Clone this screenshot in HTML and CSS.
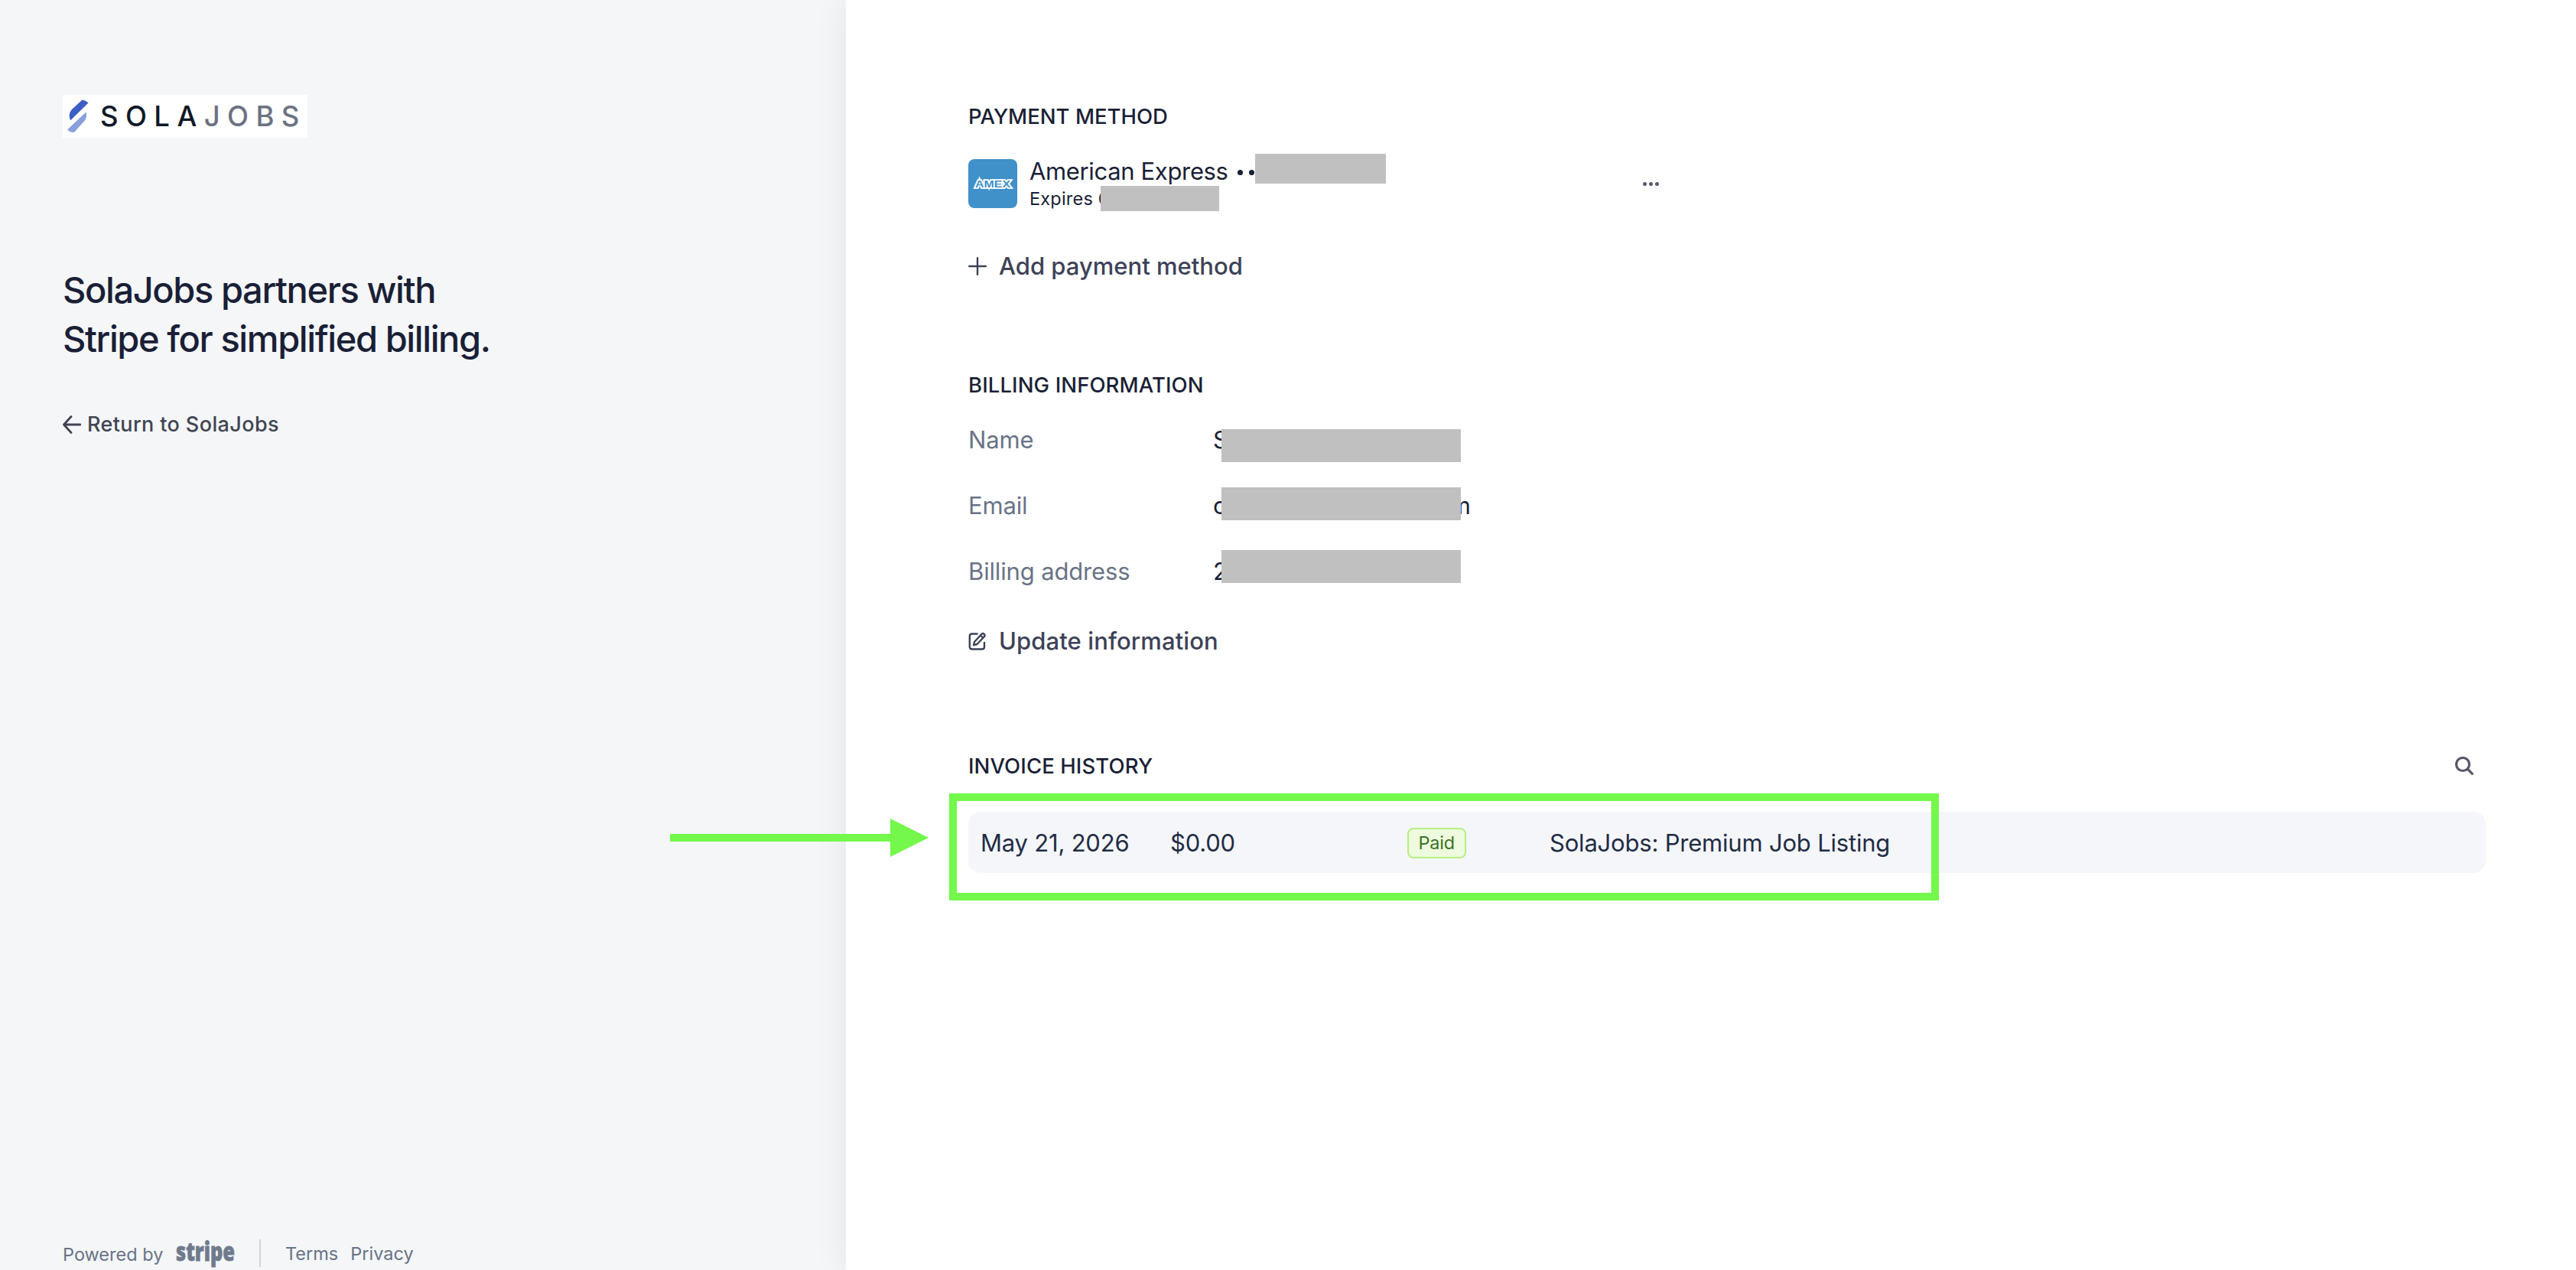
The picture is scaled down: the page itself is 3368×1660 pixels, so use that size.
FILE: index.html
```html
<!DOCTYPE html>
<html lang="en">
<head>
  <meta charset="UTF-8" />
  <title>SolaJobs Billing</title>
  <link rel="stylesheet" href="styles.css">
</head>
<body>

  <!-- Left panel -->
  <aside class="sidebar">
    <div class="logo">
      <svg class="logo-mark" viewBox="0 0 28 44" aria-hidden="true">
        <path d="M4 27.5C1.500 20 3 16.500 6 13L19.500 0.500Q24 1 27.500 4.500Z" fill="#3b5fc4"/>
        <path d="M24.500 16.500Q26 23.500 22.500 28L9 43Q4 43.500 0 39.500Z" fill="#8aa0dc"/>
      </svg>
      <span class="logo-sola">SOLA</span><span class="logo-jobs">JOBS</span>
    </div>

    <h1>SolaJobs partners with<br>Stripe for simplified billing.</h1>

    <a class="return-link" href="#">
      <svg viewBox="0 0 24 24" aria-hidden="true">
        <path d="M11 1.500L1.500 12L11 22.500M1.500 12H23"/>
      </svg>
      <span>Return to SolaJobs</span>
    </a>

    <footer class="footer">
      <span class="powered">Powered by</span>
      <svg class="stripe" viewBox="0 0 78 36" aria-label="stripe">
        <text x="0" y="28" textLength="77" lengthAdjust="spacingAndGlyphs">stripe</text>
      </svg>
      <span class="divider"></span>
      <a class="terms" href="#">Terms</a>
      <a class="privacy" href="#">Privacy</a>
    </footer>
  </aside>

  <main class="content">
    <!-- Payment method -->
    <section class="payment">
      <h2>Payment method</h2>
      <div class="card">
        <svg class="amex" viewBox="0 0 64 64" aria-hidden="true">
          <rect width="64" height="64" rx="8"/>
          <text x="9" y="36.500" textLength="46" lengthAdjust="spacingAndGlyphs">AMEX</text>
        </svg>
        <div class="card-info">
          <div class="card-name"><span>American Express</span><i class="dot"></i><i class="dot"></i><span class="redact redact-number"></span></div>
          <div class="card-expiry">Expires 0<span class="redact redact-expiry"></span></div>
        </div>
        <div class="more"><i></i><i></i><i></i></div>
      </div>
      <a class="action" href="#">
        <svg viewBox="0 0 24 24" aria-hidden="true"><path d="M12 1.200V22.800M1.200 12H22.800"/></svg>
        <span class="add-label">Add payment method</span>
      </a>
    </section>

    <!-- Billing information -->
    <section class="billing">
      <h2>Billing information</h2>
      <dl>
        <dt>Name</dt>
        <dd>S<span class="redact redact-name"></span></dd>
        <dt>Email</dt>
        <dd><span>c</span><span>m</span><span class="redact redact-email"></span></dd>
        <dt>Billing address</dt>
        <dd>2<span class="redact redact-address"></span></dd>
      </dl>
      <a class="action" href="#">
        <svg viewBox="0 0 24 24" aria-hidden="true">
          <path d="M11.500 2.500H5Q1.800 2.500 1.800 5.500V19.500Q1.800 22.500 5 22.500H18Q21 22.500 21 19.500V14"/>
          <path d="M8 13L17.500 2.800Q19 1.200 20.700 2.800Q22.300 4.300 21 6L11.500 16L7 17.200ZM16 4.500L19.300 7.600"/>
        </svg>
        <span class="update-label">Update information</span>
      </a>
    </section>

    <!-- Invoice history -->
    <section class="invoices">
      <div class="invoices-head">
        <h2>Invoice history</h2>
        <svg class="search" viewBox="0 0 24 24" aria-hidden="true">
          <circle cx="10" cy="10" r="8.500"/><path d="M16.200 16.200L22.300 22.300"/>
        </svg>
      </div>
      <div class="invoice">
        <span class="date">May 21, 2026</span>
        <span class="amount">$0.00</span>
        <span class="status"><span class="badge">Paid</span></span>
        <span class="product">SolaJobs: Premium Job Listing</span>
        <div class="highlight"></div>
        <svg class="arrow" viewBox="0 0 338 50" aria-hidden="true">
          <path d="M0 20H288V0L338 25L288 50V30H0Z"/>
        </svg>
      </div>
    </section>
  </main>

</body>
</html>
```

FILE: styles.css
```css
* {
  box-sizing: border-box;
}

body {
  display: flex;
  margin: 0;
  height: 1660px;
  overflow: hidden;
  font-family: Inter, "Liberation Sans", sans-serif;
  font-size: 31px;
  line-height: 40px;
  color: #1a1f36;
  background: white;
}

h1, h2, dl, dd {
  margin: 0;
}

h1, h2 {
  font-weight: 500;
}

a {
  color: inherit;
  text-decoration: none;
}

/* left panel */
.sidebar {
  display: flex;
  flex-direction: column;
  width: 1106px;
  padding: 124px 82px 4px;
  background: #f4f6f8;
}

.logo {
  display: flex;
  align-items: center;
  width: 320px;
  height: 56px;
  padding: 0 0 1px 6px;
  background: white;
  font-size: 36.5px;
  font-weight: 500;
}

.logo-mark {
  flex-shrink: 0;
  width: 28px;
  height: 44px;
  margin-right: 15px;
}

.logo-sola {
  letter-spacing: 9.4px;
  color: #111827;
}

.logo-jobs {
  letter-spacing: 9.4px;
  color: #6b7280;
}

h1 {
  margin-top: 167px;
  font-size: 47px;
  line-height: 64px;
  letter-spacing: -1.4px;
}

.return-link {
  display: flex;
  align-items: center;
  gap: 8px;
  margin-top: 60px;
  font-size: 27px;
  font-weight: 500;
  letter-spacing: 0.38px;
  color: #414552;
}

.return-link svg {
  width: 24px;
  height: 24px;
  fill: none;
  stroke: currentColor;
  stroke-width: 2.8;
  stroke-linecap: round;
  stroke-linejoin: round;
}

.footer {
  display: flex;
  height: 36px;
  margin-top: auto;
  font-size: 23.5px;
  line-height: 36px;
  color: #697386;
}

.powered {
  width: 148px;
  padding-top: 2px;
}

.stripe {
  width: 78px;
  height: 36px;
  overflow: visible;
}

.stripe text {
  font-family: "Open Sans", sans-serif;
  font-size: 33px;
  font-weight: 800;
  fill: #6f7a8c;
  stroke: #6f7a8c;
  stroke-width: 0.8px;
}

.divider {
  width: 2px;
  margin: 0 32px 0 31px;
  background: #d0d3d8;
}

.terms,
.privacy {
  padding-top: 1px;
}

.privacy {
  margin-left: 16px;
}

/* right panel */
.content {
  flex: 1;
  padding: 132px 118px 0 160px;
  background: white;
  box-shadow: 0 0 40px rgba(0, 0, 0, 0.08);
}

h2 {
  font-size: 27.5px;
  text-transform: uppercase;
}

.card {
  display: flex;
  align-items: center;
  width: 906px;
  height: 64px;
  margin-top: 36px;
}

.amex {
  width: 64px;
  height: 64px;
  margin-right: 16px;
}

.amex rect {
  fill: #4090c9;
}

.amex text {
  font-family: "Liberation Sans", sans-serif;
  font-size: 13px;
  font-weight: bold;
  fill: #4090c9;
  stroke: white;
  stroke-width: 3.5px;
  paint-order: stroke;
}

.card-name,
.card-expiry {
  position: relative;
}

.card-name {
  display: flex;
  align-items: center;
  letter-spacing: -0.35px;
}

.card-expiry {
  font-size: 23.5px;
  line-height: 32px;
  letter-spacing: 0.2px;
}

.dot {
  width: 7px;
  height: 7px;
  margin: 3px 0 0 8px;
  border-radius: 50%;
  background: #1a1f36;
}

.dot:first-of-type {
  margin-left: 12px;
}

.more {
  display: flex;
  gap: 3px;
  margin-left: auto;
  padding-right: 3px;
}

.more i {
  width: 5px;
  height: 5px;
  border-radius: 50%;
  background: #545969;
}

.redact {
  position: absolute;
  background: #c0c0c0;
}

.redact-number {
  left: 295px;
  top: -3px;
  width: 171px;
  height: 39px;
}

.redact-expiry {
  left: 93px;
  top: -1px;
  width: 155px;
  height: 33px;
}

.action {
  display: flex;
  align-items: center;
  gap: 16px;
  font-weight: 500;
  color: #3c4257;
}

.action svg {
  width: 24px;
  height: 24px;
  fill: none;
  stroke: currentColor;
  stroke-width: 2.4;
  stroke-linecap: round;
  stroke-linejoin: round;
}

.payment .action {
  margin-top: 56px;
}

.billing {
  margin-top: 115px;
}

.billing h2,
.invoices h2 {
  letter-spacing: 0.1px;
}

dl {
  display: grid;
  grid-template-columns: 320px 337px;
  row-gap: 46px;
  margin-top: 32px;
}

dt {
  letter-spacing: -0.15px;
  color: #697386;
}

dd {
  position: relative;
  display: flex;
  justify-content: space-between;
}

.redact-name,
.redact-email,
.redact-address {
  left: 11px;
  width: 313px;
  height: 43px;
}

.redact-name {
  top: 6px;
}

.redact-email {
  top: -4px;
}

.redact-address {
  top: -8px;
}

.billing .action {
  margin-top: 51px;
}

.update-label {
  letter-spacing: 0.1px;
}

.invoices {
  margin-top: 123px;
}

.invoices-head {
  display: flex;
  align-items: center;
  justify-content: space-between;
  padding-right: 16px;
}

.search {
  width: 24px;
  height: 24px;
  fill: none;
  stroke: #545969;
  stroke-width: 3.2;
  stroke-linecap: round;
}

.invoice {
  position: relative;
  display: grid;
  grid-template-columns: 248px 310px 186px auto;
  align-items: center;
  height: 80px;
  margin-top: 40px;
  padding: 1px 0 0 16px;
  border-radius: 16px;
  background: #f5f6fa;
  color: #1f2d45;
  letter-spacing: -0.2px;
}

.status {
  display: flex;
}

.badge {
  padding: 0 12.5px;
  border: 2px solid #b6ef83;
  border-radius: 8px;
  background: #eefbde;
  font-size: 23.5px;
  line-height: 36px;
  color: #3a7424;
}

/* callout over the invoice row */
.highlight {
  position: absolute;
  left: -25px;
  top: -24px;
  width: 1294px;
  height: 140px;
  border: 10px solid #73f84b;
}

.arrow {
  position: absolute;
  left: -390px;
  top: 9px;
  width: 338px;
  height: 50px;
  fill: #73f84b;
}
```
